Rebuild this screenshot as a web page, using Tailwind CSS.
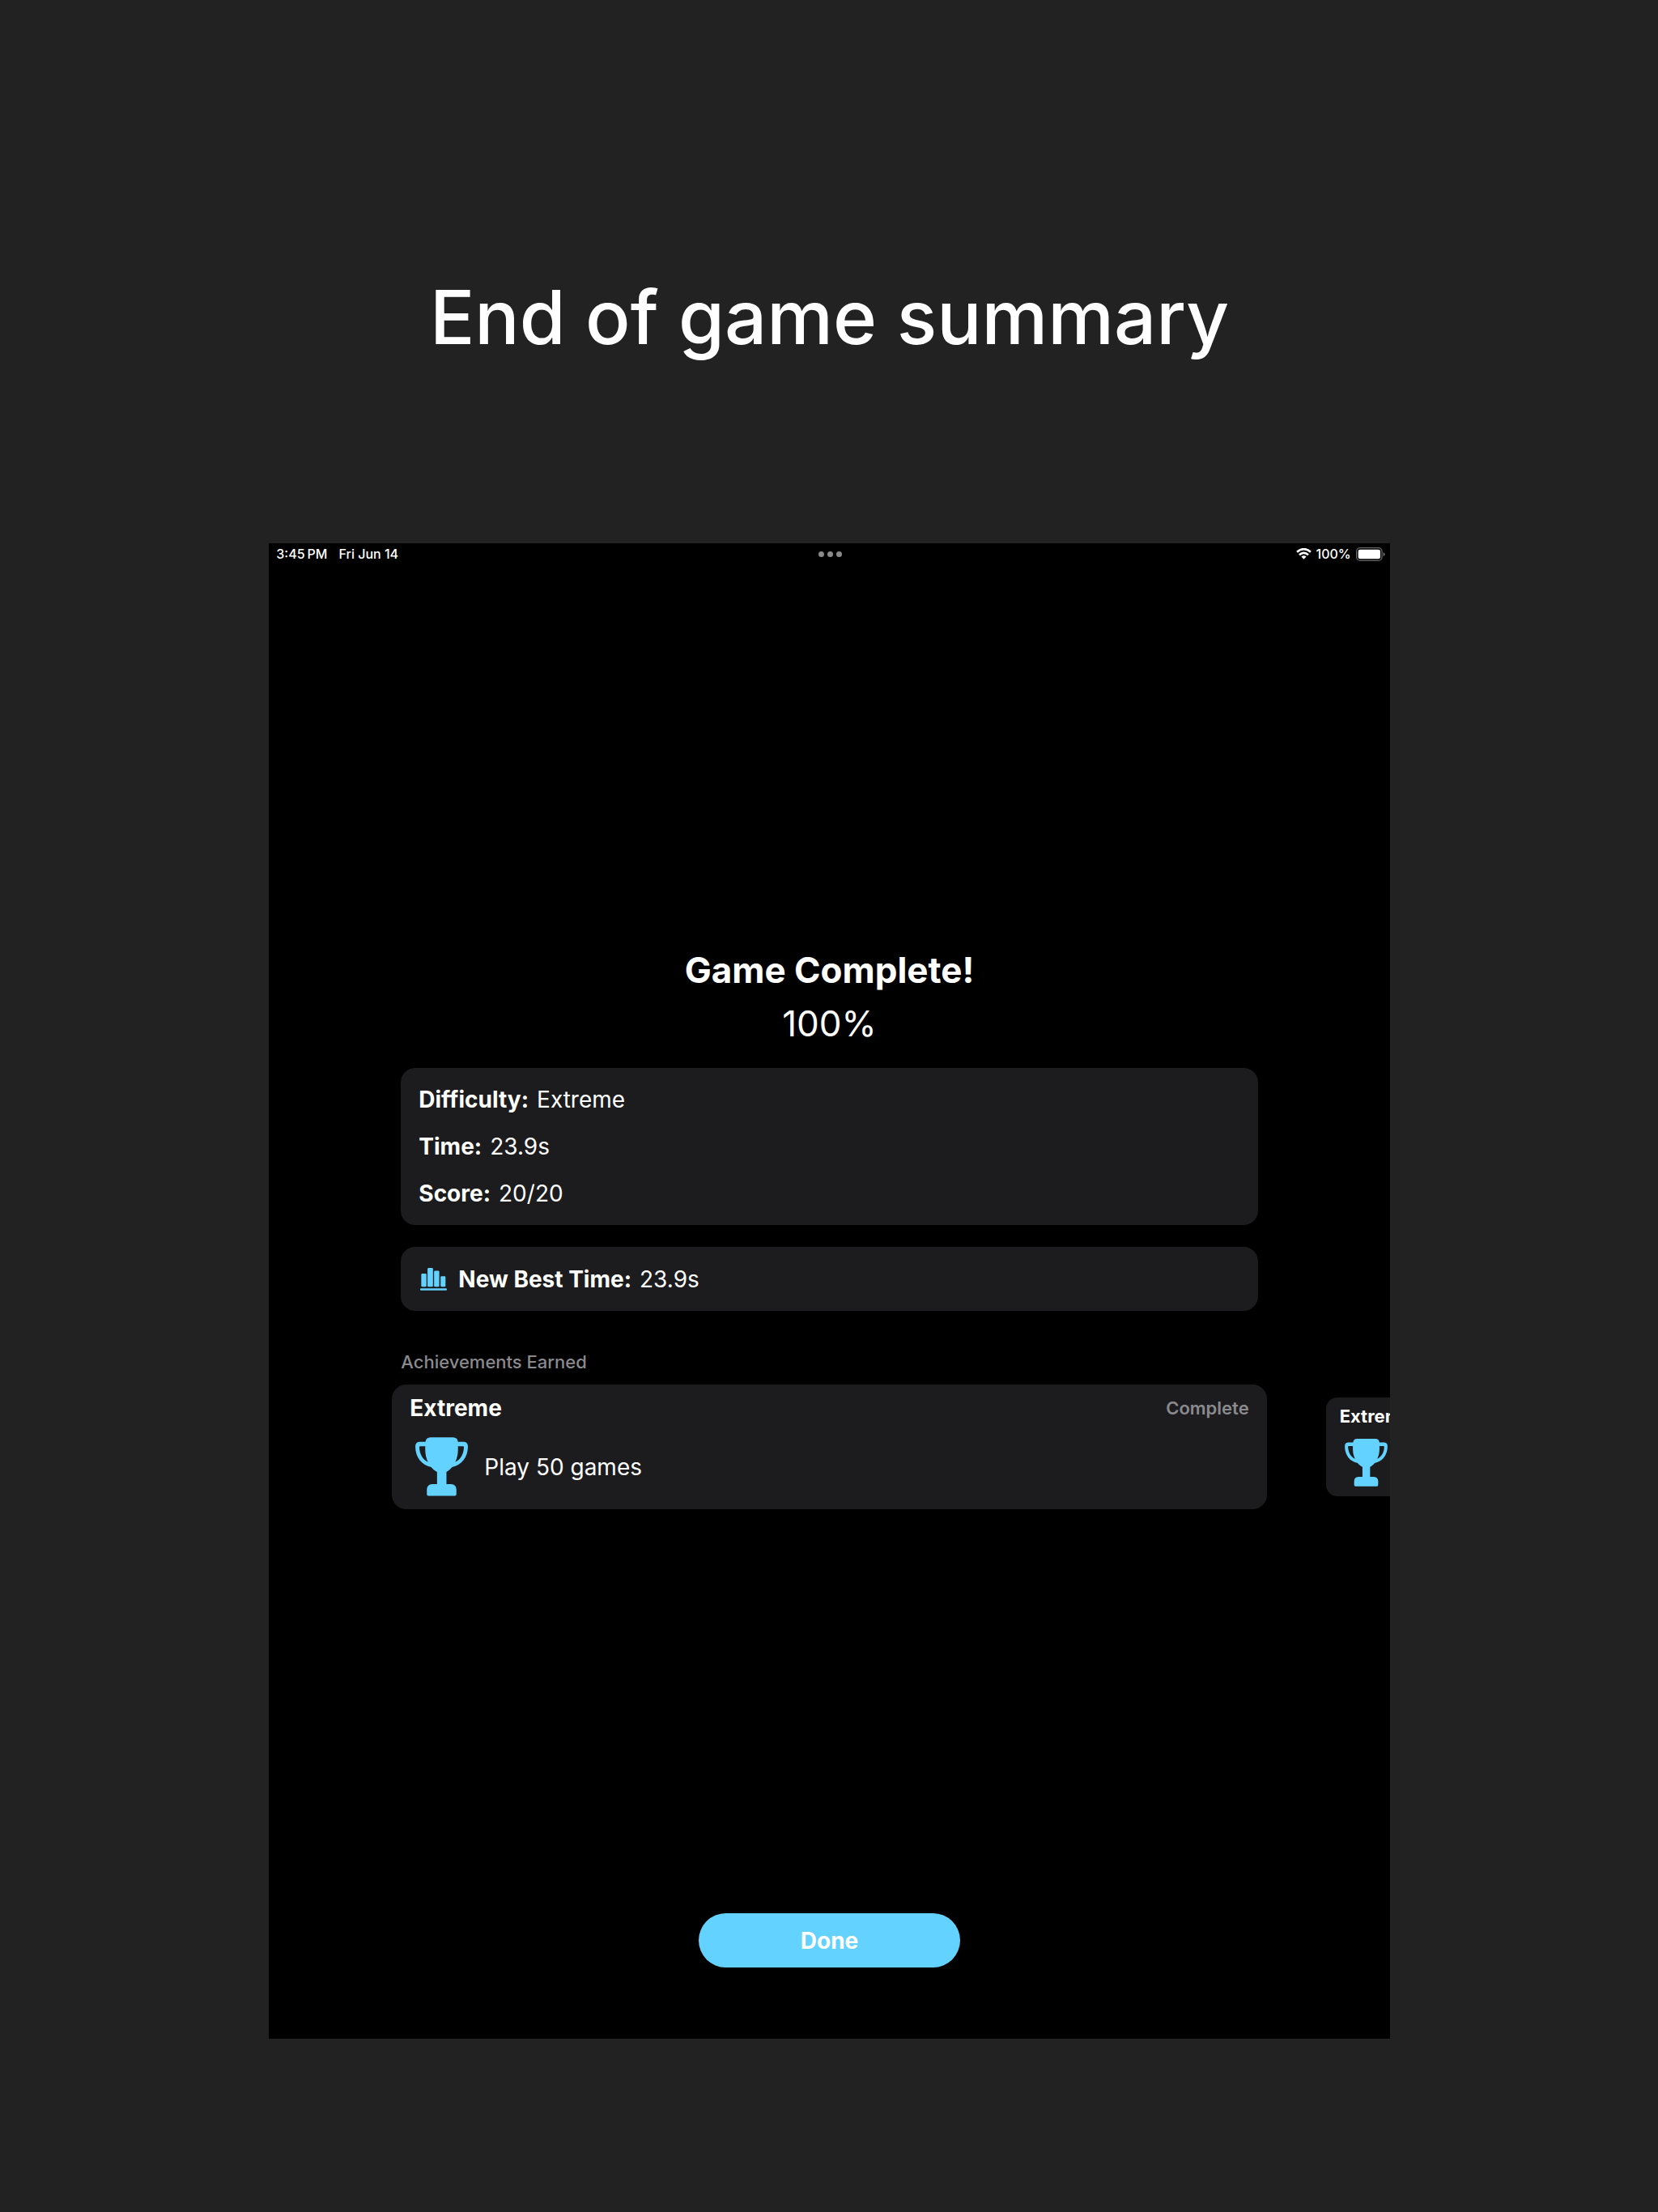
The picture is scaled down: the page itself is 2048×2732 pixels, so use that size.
<!DOCTYPE html>
<html lang="en">
<head>
<meta charset="utf-8">
<meta name="viewport" content="width=device-width, initial-scale=1">
<title>End of game summary</title>
<script src="https://cdn.jsdelivr.net/npm/@tailwindcss/browser@4"></script>
</head>
<body class="min-h-screen bg-[#222222] font-['Inter',sans-serif] text-white">
<svg class="hidden" aria-hidden="true">
  <symbol id="trophy" viewBox="99 225 196 219">
    <path fill="currentColor" fill-rule="evenodd" d="M155 225H240Q256 226 258 242H280Q295 243 295 260C295 300 270 330 236 336C230 344 222 350 215 354V399H232Q252 400 252 420V437Q252 443 246 443H148Q142 443 142 437V420Q142 400 162 399H180V354C172 350 164 344 158 336C124 330 99 300 99 260Q99 243 114 242H137Q139 226 155 225ZM136 258H118Q114 258 114 262C115 287 126 307 146 317C139 302 136 287 136 272ZM258 258H276Q280 258 280 262C279 287 268 307 248 317C255 302 258 287 258 272Z"/>
  </symbol>
</svg>
<main class="flex flex-col items-center pb-[213px] pl-px">
  <h1 class="pt-[332px] text-center text-[92px] leading-[120px] font-medium">End of game summary</h1>

  <section class="mt-[219px] flex aspect-[1385/1848] w-[67.63%] flex-col overflow-hidden bg-black">
    <header class="grid h-[26px] grid-cols-3 items-center pr-[6px] pl-[9px] text-[16px] leading-[20px] font-medium">
      <div class="flex gap-[14px]"><span class="flex gap-[3px]"><span>3:45</span><span>PM</span></span><span>Fri Jun 14</span></div>
      <div class="flex justify-center gap-1">
        <span class="size-[7px] rounded-full bg-[#8a8a8a]"></span>
        <span class="size-[7px] rounded-full bg-[#8a8a8a]"></span>
        <span class="size-[7px] rounded-full bg-[#8a8a8a]"></span>
      </div>
      <div class="flex items-center justify-end gap-[6px]">
        <svg class="h-[14px] w-[19px]" viewBox="60 52 57 43" fill="none" stroke="#fff" stroke-width="8" aria-hidden="true">
          <path d="M62.500 66.500Q88.500 44.500 114.500 66.500M71.500 77Q88.500 62.500 105.500 77"/>
          <path d="M79 84.500Q88.500 77 98 84.500L88.500 94Z" fill="#fff" stroke="none"/>
        </svg>
        <span>100%</span>
        <svg class="h-[17px] w-[36px]" viewBox="283 48 108 51" aria-hidden="true">
          <rect x="285" y="50" width="94" height="47" rx="13" fill="none" stroke="#666" stroke-width="4"/>
          <rect x="291" y="56" width="82" height="35" rx="7" fill="#fff"/>
          <path d="M384 66Q390 69 390 73.500T384 81Z" fill="#777"/>
        </svg>
      </div>
    </header>

    <div class="mt-[473px] flex flex-col px-[163px] text-center text-[44px] leading-[56px]">
      <h2 class="font-bold">Game Complete!</h2>
      <p class="mt-[10px]">100%</p>
    </div>

    <dl class="mx-[163px] mt-[27px] rounded-[18px] bg-[#1c1c1e] px-[22px] py-[10px] text-[28px] leading-[58px]">
      <div class="flex gap-[10px]"><dt class="font-bold">Difficulty:</dt><dd>Extreme</dd></div>
      <div class="flex gap-[10px]"><dt class="font-bold">Time:</dt><dd>23.9s</dd></div>
      <div class="flex gap-[10px]"><dt class="font-bold">Score:</dt><dd>20/20</dd></div>
    </dl>

    <div class="mx-[163px] mt-[27px] flex h-[79px] items-center rounded-[18px] bg-[#1c1c1e] px-6 text-[28px] leading-[36px]">
      <svg class="h-[28px] w-[33px]" viewBox="118 78 98 83" fill="#64d2ff" aria-hidden="true">
        <rect x="122" y="99" width="19" height="48" rx="4"/>
        <rect x="145" y="78" width="20" height="69" rx="4"/>
        <rect x="169" y="88" width="19" height="59" rx="4"/>
        <rect x="193" y="108" width="18" height="39" rx="4"/>
        <rect x="118" y="153" width="98" height="7" rx="3"/>
      </svg>
      <strong class="ml-[14px] font-bold">New Best Time:</strong>
      <span class="ml-[10px]">23.9s</span>
    </div>

    <h3 class="mx-[163px] mt-[49px] text-[22px] leading-[28px] font-medium text-[#8a8a8e]">Achievements Earned</h3>

    <div class="mt-[14px] flex items-center gap-[73px] overflow-hidden px-[152px]">
      <article class="w-full shrink-0 rounded-[18px] bg-[#1c1c1e] px-[22px] pb-4">
        <div class="flex h-[58px] items-center justify-between">
          <h4 class="text-[28px] leading-[36px] font-bold">Extreme</h4>
          <span class="text-[22px] leading-[28px] font-semibold text-[#8a8a8e]">Complete</span>
        </div>
        <div class="flex items-center gap-5 pt-[7px] pl-[7px]">
          <svg class="h-[73px] w-[65px] text-[#64d2ff]" aria-hidden="true"><use href="#trophy"/></svg>
          <p class="text-[28px] leading-[36px]">Play 50 games</p>
        </div>
      </article>
      <article class="w-4/5 shrink-0 rounded-[14px] bg-[#1c1c1e] px-[17px] pb-3">
        <h4 class="flex h-[46px] items-center text-[22px] leading-[28px] font-bold">Extreme</h4>
        <div class="pt-[5px] pl-[6px]">
          <svg class="h-[59px] w-[53px] text-[#64d2ff]" aria-hidden="true"><use href="#trophy"/></svg>
        </div>
      </article>
    </div>

    <button type="button" class="mx-auto mt-auto mb-[88px] h-[67px] w-[323px] shrink-0 rounded-full bg-[#64d2ff] text-[28px] leading-[36px] font-bold">Done</button>
  </section>
</main>
</body>
</html>
